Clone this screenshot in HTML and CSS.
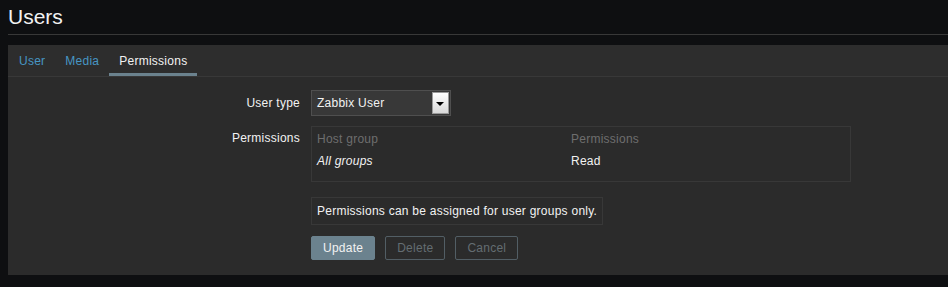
FILE: index.html
```html
<!DOCTYPE html>
<html lang="en">

<head>
  <meta charset="UTF-8">
  <meta name="viewport" content="width=device-width, initial-scale=1.0">
  <title>Users</title>
  <link rel="stylesheet" href="styles.css">
</head>

<body>
  <header class="page-header">
    <h1>Users</h1>
  </header>

  <div class="panel">
    <ul class="tabs">
      <li><a href="#">User</a></li>
      <li><a href="#">Media</a></li>
      <li class="active"><a href="#">Permissions</a></li>
    </ul>

    <form class="user-form">
      <div class="form-row row-type">
        <label class="form-label">User type</label>
        <div class="form-field">
          <div class="select">
            <span class="select-value">Zabbix User</span>
            <span class="select-arrow"></span>
          </div>
        </div>
      </div>

      <div class="form-row row-perms">
        <label class="form-label label-top">Permissions</label>
        <div class="form-field">
          <div class="perm-box">
            <table class="perm-table">
              <thead>
                <tr>
                  <th>Host group</th>
                  <th>Permissions</th>
                </tr>
              </thead>
              <tbody>
                <tr>
                  <td><em>All groups</em></td>
                  <td>Read</td>
                </tr>
              </tbody>
            </table>
          </div>
        </div>
      </div>

      <div class="form-row row-info">
        <div class="form-label"></div>
        <div class="form-field">
          <div class="info-box">Permissions can be assigned for user groups only.</div>
        </div>
      </div>

      <div class="form-row row-buttons">
        <div class="form-label"></div>
        <div class="form-field buttons">
          <button type="submit" class="btn btn-main">Update</button>
          <button type="button" class="btn btn-alt" disabled>Delete</button>
          <button type="button" class="btn btn-alt">Cancel</button>
        </div>
      </div>
    </form>
  </div>
</body>

</html>
```

FILE: styles.css
```css
body {
  margin: 0;
  background: #0e0f11;
  color: #f2f2f2;
  font-family: "Liberation Sans", Arial, sans-serif;
  font-size: 12px;
  line-height: 14px;
  letter-spacing: 0.25px;
}

.page-header {
  margin-left: 8px;
  padding: 5px 0 5px 0;
  border-bottom: 1px solid #383838;
}

.page-header h1 {
  margin: 0;
  font-size: 21px;
  font-weight: normal;
  line-height: 24px;
  letter-spacing: 0;
  color: #f2f2f2;
}

.panel {
  margin: 10px 0 0 8px;
  height: 230px;
  background: #2b2b2b;
}

.tabs {
  list-style: none;
  margin: 0;
  padding: 0 0 0 1px;
  display: flex;
  height: 31px;
  background: #2d2d2d;
  border-bottom: 1px solid #383838;
}

.tabs li {
  padding: 4px 10px 0;
  line-height: 24px;
  border-bottom: 3px solid transparent;
}

.tabs li a {
  color: #4796c4;
  text-decoration: none;
}

.tabs li.active {
  border-bottom-color: #6b828e;
}

.tabs li.active a {
  color: #f2f2f2;
}

.user-form {
  padding-top: 13px;
}

.form-row {
  display: flex;
}

.form-label {
  width: 292px;
  padding-right: 11px;
  text-align: right;
  flex-shrink: 0;
}

.row-type .form-label {
  line-height: 26px;
}

.label-top {
  padding-top: 5px;
}

.row-perms {
  margin-top: 10px;
}

.row-info {
  margin-top: 15px;
}

.row-buttons {
  margin-top: 11px;
}

/* select */
.select {
  display: flex;
  box-sizing: border-box;
  width: 140px;
  height: 26px;
  padding: 1px;
  background: #383838;
  border: 1px solid #4f4f4f;
}

.select-value {
  flex: 1;
  padding-left: 4px;
  line-height: 22px;
}

.select-arrow {
  position: relative;
  box-sizing: border-box;
  width: 17px;
  height: 22px;
  background: linear-gradient(#fefefe, #d9d9d9);
  border: 1px solid #9a9a9a;
}

.select-arrow::after {
  content: "";
  position: absolute;
  left: 3px;
  top: 9px;
  border-left: 4px solid transparent;
  border-right: 4px solid transparent;
  border-top: 4px solid #000;
}

/* permissions table */
.perm-box {
  box-sizing: border-box;
  width: 540px;
  padding: 1px 0 9px;
  border: 1px solid #383838;
}

.perm-table {
  border-collapse: collapse;
  table-layout: fixed;
  width: 100%;
}

.perm-table th,
.perm-table td {
  padding: 4px 5px;
  text-align: left;
  line-height: 14px;
}

.perm-table th {
  font-weight: normal;
  color: #6e6e6e;
}

.perm-table th:first-child {
  width: 244px;
}

/* info */
.info-box {
  display: inline-block;
  padding: 6px 5px;
  border: 1px solid #383838;
}

/* buttons */
.buttons {
  display: flex;
  gap: 10px;
}

.btn {
  height: 24px;
  padding: 0 11px;
  font-family: inherit;
  font-size: 12px;
  line-height: 22px;
  letter-spacing: 0.25px;
  border: 1px solid #6b828e;
  border-radius: 2px;
  cursor: pointer;
}

.btn-main {
  background: #6b828e;
  color: #f2f2f2;
}

.btn-alt {
  background: transparent;
  border-color: #525e65;
  color: #646d72;
}
```
